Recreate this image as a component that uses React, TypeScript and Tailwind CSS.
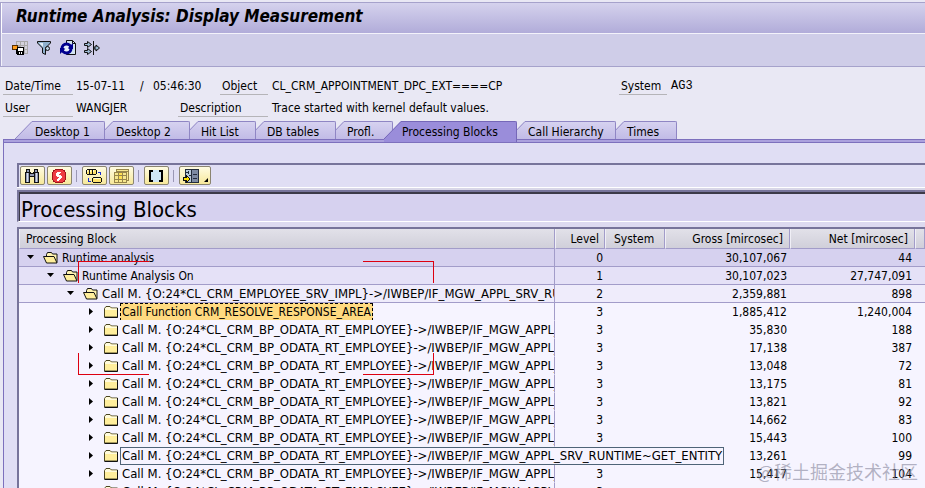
import type { ReactNode } from 'react'
import { clsx } from 'clsx'

const tabs = [
  { name: 'Desktop 1', size: 'z-[8] w-[90px]' },
  { name: 'Desktop 2', size: 'z-[7] w-[94px]' },
  { name: 'Hit List', size: 'z-[6] w-[75px]' },
  { name: 'DB tables', size: 'z-[5] w-[89px]' },
  { name: 'Profl.', size: 'z-[4] w-[66px]' },
  { name: 'Processing Blocks', size: 'z-10 w-[133px]', active: true },
  { name: 'Call Hierarchy', size: 'z-[2] w-[108px]' },
  { name: 'Times', size: 'z-[1] w-[70px]' },
]

interface Block {
  text: string
  level: number
  gross: string
  net: string
  mark?: 'selected' | 'tooltip'
}

const METHOD = 'Call M. {O:24*CL_CRM_BP_ODATA_RT_EMPLOYEE}->/IWBEP/IF_MGW_APPL_SRV_RUNTIME~GET_ENTITY'

const blocks: Block[] = [
  { text: 'Runtime analysis', level: 0, gross: '30,107,067', net: '44' },
  { text: 'Runtime Analysis On', level: 1, gross: '30,107,023', net: '27,747,091' },
  { text: 'Call M. {O:24*CL_CRM_EMPLOYEE_SRV_IMPL}->/IWBEP/IF_MGW_APPL_SRV_RUNTIME', level: 2, gross: '2,359,881', net: '898' },
  { text: 'Call Function CRM_RESOLVE_RESPONSE_AREA', level: 3, gross: '1,885,412', net: '1,240,004', mark: 'selected' },
  { text: METHOD, level: 3, gross: '35,830', net: '188' },
  { text: METHOD, level: 3, gross: '17,138', net: '387' },
  { text: METHOD, level: 3, gross: '13,048', net: '72' },
  { text: METHOD, level: 3, gross: '13,175', net: '81' },
  { text: METHOD, level: 3, gross: '13,821', net: '92' },
  { text: METHOD, level: 3, gross: '14,662', net: '83' },
  { text: METHOD, level: 3, gross: '15,443', net: '100' },
  { text: METHOD, level: 3, gross: '13,261', net: '99', mark: 'tooltip' },
  { text: METHOD, level: 3, gross: '15,417', net: '104' },
  { text: METHOD, level: 3, gross: '', net: '' },
]

const rowStyle = [
  'bg-[#d6d1ef] border-[#a29cc9]',
  'bg-[#e5e1f7] border-[#a29cc9]',
  'bg-[#efecfb] border-[#a29cc9]',
  'bg-[#f6f4ff] border-[#f6f4ff]',
]

const indent = ['pl-[6px]', 'pl-[26px]', 'pl-[46px]', 'pl-[66px]']

function Icon({ children, smooth }: { children: ReactNode; smooth?: boolean }) {
  return (
    <svg
      viewBox="0 0 16 16"
      className="h-4 w-4 shrink-0"
      shapeRendering={smooth ? 'auto' : 'crispEdges'}
      aria-hidden="true"
    >
      {children}
    </svg>
  )
}

function SaveLayoutIcon() {
  return (
    <Icon>
      <path d="M4 1h12v13H4z" fill="#a9a7a8" />
      <path d="M5 2h3v3H5zM9 2h3v3H9zM13 2h2v3h-2zM9 6h3v3H9zM13 6h2v3h-2zM13 10h2v3h-2z" fill="#d3d1dc" />
      <path d="M0 5h6v5H0z" fill="#5a3000" />
      <path d="M1 6h4v3H1z" fill="#ff9d1c" />
      <path d="M4 7h8v8H5v-1H4z" fill="#000" />
      <path d="M6 8h5v3H6zM7 12h1v2H7zM9 12h1v2H9z" fill="#fff" />
      <path d="M4 7h1v2H4z" fill="#ff9d1c" />
    </Icon>
  )
}

function FilterIcon() {
  return (
    <Icon smooth>
      <path d="M1.500 1.500h13v1.500l-5 5v6.500l-3-1.500V8l-5-5z" fill="#8fb0cc" stroke="#111" />
      <path d="M3 3h4v4z" fill="#e3eef7" />
      <circle cx="11.500" cy="8.500" r="2" fill="#b9cfe0" stroke="#111" />
    </Icon>
  )
}

function RefreshIcon() {
  return (
    <Icon smooth>
      <path d="M6.500.5h6l3 3v11h-9z" fill="#d3e4f2" stroke="#111" />
      <path d="M12.500.5v3h3" fill="none" stroke="#111" />
      <circle cx="6.500" cy="8.500" r="4.500" fill="#e6f0fa" stroke="#00008f" strokeWidth="3" />
      <path d="M7 9h6V3zM6 8H0v6z" fill="#00008f" />
      <path d="M4 8.500l3-2.500v2h2l-3 3V9z" fill="#e6f0fa" />
    </Icon>
  )
}

function ExpandIcon() {
  return (
    <Icon smooth>
      <path d="M.5 3.500h3v-2l4 3-4 3v-2h-3zM.5 10.500h3v-2l4 3-4 3v-2h-3zM10 7h2V5l3.500 3-3.500 3V9h-2z" fill="#9dbad2" stroke="#111" />
      <path d="M9.500 1v14" stroke="#111" />
    </Icon>
  )
}

function FindIcon() {
  return (
    <Icon>
      <path d="M2 1h4v3h1v1h2V4h1V1h4v3h1v11h-5V9H6v6H1V4h1z" fill="#111" />
      <path d="M3 2h2v2H3zM11 2h2v2h-2zM2 5h3v9H2zM11 5h3v9h-3zM6 6h4v2H6z" fill="#8f99b5" />
      <path d="M3 5h1v9H3zM12 5h1v9h-1z" fill="#d7ddeb" />
    </Icon>
  )
}

function StopIcon() {
  return (
    <Icon>
      <path d="M4 1h8v1h2v2h1v8h-1v2h-2v1H4v-1H2v-2H1V4h1V2h2z" fill="#a0141c" />
      <path d="M4 2h8v1h1v1h1v8h-1v1h-1v1H4v-1H3v-1H2V4h1V3h1z" fill="#ee3b42" />
      <path d="M6 4h4v1H9v1H8v1h2v1h1v2h-1v1H9v1H8v1H6v-2h1v-1h1V9H6V8H5V5h1z" fill="#fff" />
    </Icon>
  )
}

function HierarchyIcon() {
  return (
    <Icon>
      <path d="M1 1h9v1h1v4h-1v1H1V6H0V2h1z" fill="#111" />
      <path d="M1 2h2v4H1zM4 2h2v4H4zM7 2h3v4H7z" fill="#ffe36b" />
      <path d="M1 2h1v2H1zM4 2h1v2H4zM7 2h1v2H7z" fill="#fffbd0" />
      <path d="M7 9h8v1h1v4h-1v1H7v-1H6v-4h1z" fill="#111" />
      <path d="M7 10h8v4H7z" fill="#ffe36b" />
      <path d="M8 10h6v1H8z" fill="#fffbd0" />
      <path d="M12 4h3v3h-1V5h-2zM2 10h1v3h2v1H2z" fill="#1a2fd0" />
    </Icon>
  )
}

function TableIcon() {
  return (
    <Icon>
      <path d="M3 1h13v12h-2v2H1V4h2z" fill="#98864a" />
      <path d="M4 2h11v1H4zM14 4h1v8h-1zM2 5h3v2H2zM6 5h3v2H6zM10 5h3v2h-3zM2 8h3v3H2zM6 8h3v3H6zM10 8h3v3h-3zM2 12h3v2H2zM6 12h3v2H6zM10 12h3v2h-3z" fill="#f7e88f" />
      <path d="M6 5h3v2H6zM6 8h3v3H6z" fill="#ffe052" />
    </Icon>
  )
}

function BracketsIcon() {
  return (
    <Icon>
      <path d="M1 2h14v12H1z" fill="#cfe6f5" />
      <path d="M1 2h4v2H3v8h2v2H1zM15 2h-4v2h2v8h-2v2h4z" fill="#000" />
    </Icon>
  )
}

function LayoutIcon() {
  return (
    <Icon>
      <path d="M2 1h14v14H2z" fill="#222c3c" />
      <path d="M3 2h5v12H3z" fill="#b8c9da" />
      <path d="M9 2h6v12H9z" fill="#7c8aa3" />
      <path d="M3 4h3v1H3zM5 3h1v3H5zM6 7h2v1H6zM10 6h4v1h-4zM10 10h4v1h-4z" fill="#222c3c" />
      <path d="M0 9h3V7h1v1h1v1h1v1h1v2H6v1H5v1H4v1H3v-2H0z" fill="#111" />
      <path d="M1 10h3V9h1v1h1v2H5v1H4v-1H1z" fill="#ffe000" />
    </Icon>
  )
}

function FolderIcon({ open }: { open: boolean }) {
  if (open) {
    return (
      <Icon smooth>
        <path d="M3.500 12.500v-8l1-2h4l1 1.500h4.500v8.500z" fill="#fff3b0" stroke="#111" />
        <path d="M.5 6.500h10.500l3 6.500H3.500z" fill="#ffee9c" stroke="#111" />
      </Icon>
    )
  }
  return (
    <Icon smooth>
      <path d="M1.500 13V4.500l1.500-2h4L8.500 4h6v9z" fill="#ffee9c" stroke="#4a4520" />
      <path d="M2 4.500L3.500 3h3L8 4.500h6V6H2z" fill="#fffbdc" />
      <path d="M14.500 4v9.500h-13" fill="none" stroke="#111" />
    </Icon>
  )
}

function ToolButton({ label, children, wide }: { label: string; children: ReactNode; wide?: boolean }) {
  return (
    <button
      aria-label={label}
      className={clsx(
        'flex h-[19px] items-center rounded-[2px] border border-[#8b8570] bg-linear-to-b from-[#fffce2] to-[#f7e89a] pl-[3px]',
        wide ? 'w-8' : 'w-[25px]'
      )}
    >
      {children}
    </button>
  )
}

function Separator() {
  return (
    <div className="flex h-[19px] items-center pr-[3px] pl-[2px]">
      <div className="h-3 w-px bg-[#9a97b5]" />
    </div>
  )
}

function Label({ children, className }: { children: ReactNode; className: string }) {
  return <span className={clsx('h-5 border-b border-[#b5b4b8] pl-[2px]', className)}>{children}</span>
}

function Tab({ name, size, active }: { name: string; size: string; active?: boolean }) {
  return (
    <button
      role="tab"
      aria-selected={!!active}
      className={clsx('relative -ml-[9px] flex shrink-0', size, active ? 'h-[21px]' : 'h-[18px]')}
    >
      <svg viewBox="0 0 18 21" className="h-[21px] w-[18px] shrink-0" aria-hidden="true">
        <defs>
          <linearGradient id="tabFill" x1="0" y1="0" x2="0" y2="18" gradientUnits="userSpaceOnUse">
            <stop offset="0" stopColor="#d6d2f0" />
            <stop offset="1" stopColor="#c1bbe6" />
          </linearGradient>
        </defs>
        <path d={active ? 'M0 18L17 0h1v21H0z' : 'M0 18L17 0h1v18z'} fill={active ? '#9a8dda' : 'url(#tabFill)'} />
        <path d="M0 18L17 .5h1" fill="none" stroke={active ? '#7567b8' : '#8f86c4'} />
      </svg>
      <span
        className={clsx(
          'h-full flex-1 rounded-tr-[2px] border-t border-r text-left leading-5 whitespace-nowrap',
          active ? 'border-[#7567b8] bg-[#9a8dda]' : 'border-[#8f86c4] bg-linear-to-b from-[#d6d2f0] to-[#c1bbe6] pl-[2px]'
        )}
      >
        {name}
      </span>
    </button>
  )
}

function BlockRow({ text, level, gross, net, mark }: Block) {
  const open = level < 3
  return (
    <tr className={clsx('h-[18px]', rowStyle[level])}>
      <td className="relative border-r border-b border-r-[#a29cc9] border-b-inherit p-0">
        <div className={clsx('flex h-[17px] items-center', indent[level], mark !== 'tooltip' && 'overflow-hidden')}>
          <button aria-label={open ? 'Collapse' : 'Expand'} className="flex w-[18px] shrink-0">
            <svg viewBox="0 0 12 12" className="h-3 w-3" aria-hidden="true">
              <path d={open ? 'M2 3h7L5.500 7z' : 'M4 2v7l4-3.500z'} fill="#000" />
            </svg>
          </button>
          <FolderIcon open={open} />
          <span
            className={clsx(
              'ml-px h-[18px] border px-px leading-4 whitespace-nowrap',
              text.startsWith('Call M.') && 'text-[13px]',
              !mark && 'border-transparent',
              mark === 'selected' && 'border-dashed border-black bg-[#ffda80]',
              mark === 'tooltip' && 'relative z-10 border-[#4f6478] bg-[#f6f4ff]'
            )}
          >
            {text}
          </span>
        </div>
      </td>
      <td className="border-b border-b-inherit p-0 pr-[2px] text-right">{level}</td>
      <td className="border-b border-b-inherit p-0" />
      <td className="border-b border-b-inherit p-0 pr-[3px] text-right">{gross}</td>
      <td className="border-b border-b-inherit p-0 pr-[3px] text-right">{net}</td>
      <td className="border-b border-b-inherit p-0" />
    </tr>
  )
}

const th = 'border-r border-b border-[#a29cc9] border-l border-l-[#f0eff6] p-0 font-normal'

export default function App() {
  return (
    <div className="relative flex h-screen flex-col overflow-hidden bg-[#e9e8f4] pt-[2px] font-['DejaVu_Sans_Condensed','DejaVu_Sans',sans-serif] text-[12px] leading-4 text-black">
      <header className="shrink-0 border-y border-l border-[#a6a2cb] bg-[#cfcde8]">
        <h1 className="h-[30px] border-l border-white bg-linear-to-b from-[#d5d2ed] to-[#b1acd9] pl-[14px] text-[17px] leading-[27px] font-bold italic">
          Runtime Analysis: Display Measurement
        </h1>
        <div className="flex h-[33px] items-start gap-2 border-t border-l border-[#f3f2fa] pt-[6px] pl-[10px]">
          <button aria-label="Save layout"><SaveLayoutIcon /></button>
          <button aria-label="Filter"><FilterIcon /></button>
          <button aria-label="Refresh"><RefreshIcon /></button>
          <button aria-label="Expand"><ExpandIcon /></button>
        </div>
      </header>

      <section className="shrink-0 pt-2 pb-[2px] pl-[3px] whitespace-nowrap">
        <div className="flex h-[22px] leading-[22px]">
          <Label className="w-[70px]">Date/Time</Label>
          <span className="w-16 pl-[3px]">15-07-11</span>
          <span className="w-4 pl-[3px]">/</span>
          <span className="w-[67px]">05:46:30</span>
          <Label className="w-12">Object</Label>
          <span className="w-[351px] pl-1">CL_CRM_APPOINTMENT_DPC_EXT====CP</span>
          <Label className="w-12">System</Label>
          <span className="pl-1 font-['Liberation_Mono',monospace]">AG3</span>
        </div>
        <div className="flex h-[22px] leading-[22px]">
          <Label className="w-[70px]">User</Label>
          <span className="w-[105px] pl-[3px]">WANGJER</span>
          <Label className="w-[90px]">Description</Label>
          <span className="pl-1">Trace started with kernel default values.</span>
        </div>
      </section>

      <div role="tablist" className="relative z-10 flex h-[18px] shrink-0 pl-6">
        {tabs.map((tab) => (
          <Tab key={tab.name} {...tab} />
        ))}
      </div>

      <main className="ml-[3px] flex min-h-0 flex-1 flex-col border-t border-l border-[#7d70bd] bg-[#e0def4]">
        <div className="h-[3px] shrink-0 border-b border-[#7d70bd] bg-[#aba1dd]" />
        <div className="mt-5 ml-[13px] flex h-6 shrink-0 items-start gap-[2px] border-t-2 border-l-2 border-[#77749a] pt-px pl-px">
          <ToolButton label="Find"><FindIcon /></ToolButton>
          <ToolButton label="Cancel"><StopIcon /></ToolButton>
          <Separator />
          <ToolButton label="Hierarchy"><HierarchyIcon /></ToolButton>
          <ToolButton label="Table"><TableIcon /></ToolButton>
          <Separator />
          <ToolButton label="Brackets"><BracketsIcon /></ToolButton>
          <Separator />
          <ToolButton label="Layout" wide>
            <LayoutIcon />
            <svg viewBox="0 0 4 4" className="mt-2 ml-[5px] h-1 w-1" aria-hidden="true">
              <path d="M4 0v4H0z" fill="#000" />
            </svg>
          </ToolButton>
        </div>
        <div className="ml-[13px] h-[3px] shrink-0 border-t border-white bg-[#d9d7e8]" />
        <div className="ml-[13px] h-8 shrink-0 border-t-2 border-l-2 border-[#77749a] border-b border-b-white bg-[#d6d1ef]">
          <h2 className="h-[29px] overflow-hidden border-t-2 border-l border-[#3c3a48] pl-px text-[22px] leading-[31px]">
            Processing Blocks
          </h2>
        </div>
        <div className="ml-[13px] h-[5px] shrink-0 bg-[#dddaf0]" />
        <div className="relative ml-[13px] min-h-0 flex-1 overflow-hidden border-t-2 border-l-2 border-[#77749a] bg-[#f6f4ff]">
          <table className="w-full table-fixed border-separate border-spacing-0">
            <colgroup>
              <col className="w-[536px]" />
              <col className="w-[50px]" />
              <col className="w-[60px]" />
              <col className="w-[125px]" />
              <col className="w-[125px]" />
              <col />
            </colgroup>
            <thead>
              <tr className="h-5 bg-linear-to-b from-[#e2e1e9] to-[#cfced9]">
                <th className={clsx(th, 'pl-[6px] text-left')}>Processing Block</th>
                <th className={clsx(th, 'pr-[5px] text-right')}>Level</th>
                <th className={clsx(th, 'pl-2 text-left')}>System</th>
                <th className={clsx(th, 'pr-[6px] text-right')}>Gross [mircosec]</th>
                <th className={clsx(th, 'pr-[6px] text-right')}>Net [mircosec]</th>
                <th className={th} />
              </tr>
            </thead>
            <tbody>
              {blocks.map((block, i) => (
                <BlockRow key={i} {...block} />
              ))}
            </tbody>
          </table>

          {/* corner marks around the employee calls */}
          <div className="absolute top-8 left-[59px] h-[22px] w-[71px] border-t border-l border-[#dd0010]" />
          <div className="absolute top-8 left-[344px] h-[22px] w-[71px] border-t border-r border-[#dd0010]" />
          <div className="absolute top-[124px] left-[59px] h-[22px] w-[71px] border-b border-l border-[#dd0010]" />
          <div className="absolute top-[124px] left-[344px] h-[22px] w-[71px] border-r border-b border-[#dd0010]" />
        </div>
      </main>

      <div className="absolute right-[7px] bottom-[5px] z-20 font-['Noto_Sans_CJK_SC',sans-serif] text-[18px] leading-6 text-[#85849a]/60">
        @稀土掘金技术社区
      </div>
    </div>
  )
}
